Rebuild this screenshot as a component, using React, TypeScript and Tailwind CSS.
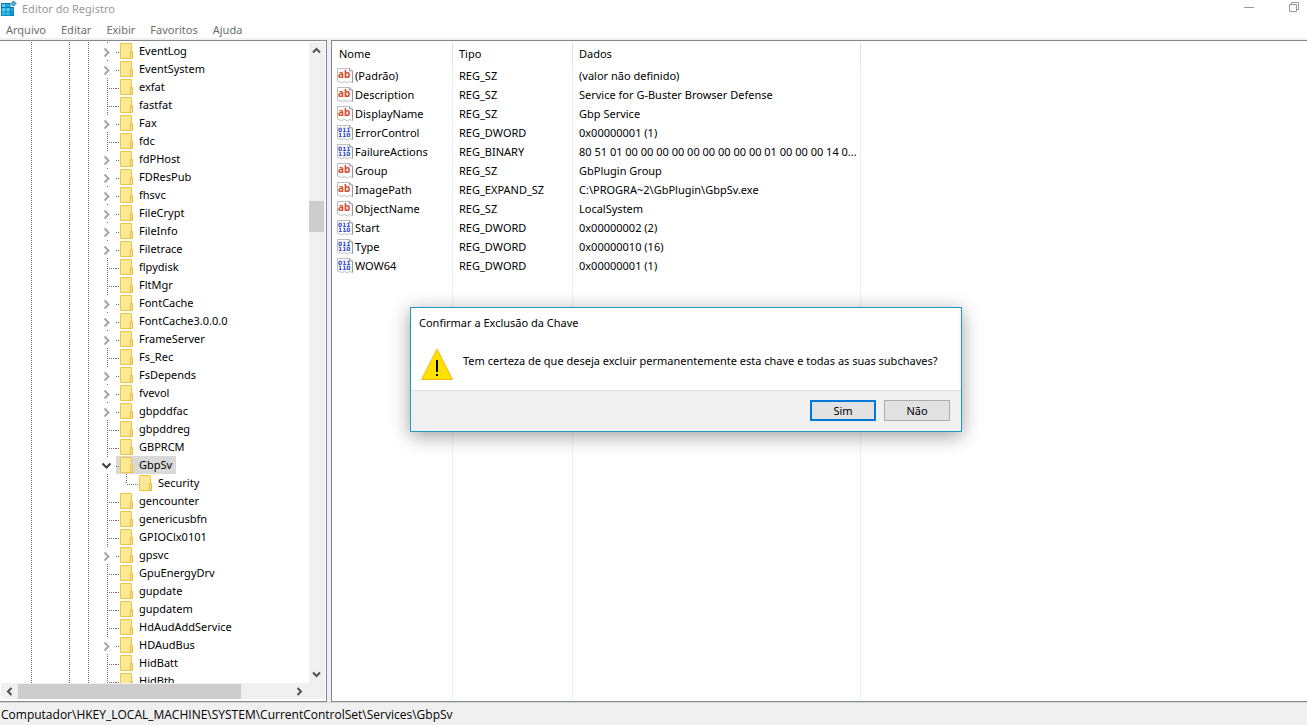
import { memo, useState } from 'react';

type TreeKey = {
  name: string;
  children?: boolean;
  open?: boolean;
  nested?: boolean;
};

type RegistryValue = {
  name: string;
  type: string;
  data: string;
};

const menus = ['Arquivo', 'Editar', 'Exibir', 'Favoritos', 'Ajuda'];

const treeKeys: TreeKey[] = [
  { name: 'EventLog', children: true },
  { name: 'EventSystem', children: true },
  { name: 'exfat' },
  { name: 'fastfat' },
  { name: 'Fax', children: true },
  { name: 'fdc' },
  { name: 'fdPHost', children: true },
  { name: 'FDResPub', children: true },
  { name: 'fhsvc', children: true },
  { name: 'FileCrypt', children: true },
  { name: 'FileInfo', children: true },
  { name: 'Filetrace', children: true },
  { name: 'flpydisk' },
  { name: 'FltMgr' },
  { name: 'FontCache', children: true },
  { name: 'FontCache3.0.0.0', children: true },
  { name: 'FrameServer', children: true },
  { name: 'Fs_Rec' },
  { name: 'FsDepends', children: true },
  { name: 'fvevol', children: true },
  { name: 'gbpddfac', children: true },
  { name: 'gbpddreg' },
  { name: 'GBPRCM' },
  { name: 'GbpSv', children: true, open: true },
  { name: 'Security', nested: true },
  { name: 'gencounter' },
  { name: 'genericusbfn' },
  { name: 'GPIOClx0101' },
  { name: 'gpsvc', children: true },
  { name: 'GpuEnergyDrv' },
  { name: 'gupdate' },
  { name: 'gupdatem' },
  { name: 'HdAudAddService' },
  { name: 'HDAudBus', children: true },
  { name: 'HidBatt' },
  { name: 'HidBth' },
];

const values: RegistryValue[] = [
  { name: '(Padrão)', type: 'REG_SZ', data: '(valor não definido)' },
  { name: 'Description', type: 'REG_SZ', data: 'Service for G-Buster Browser Defense' },
  { name: 'DisplayName', type: 'REG_SZ', data: 'Gbp Service' },
  { name: 'ErrorControl', type: 'REG_DWORD', data: '0x00000001 (1)' },
  { name: 'FailureActions', type: 'REG_BINARY', data: '80 51 01 00 00 00 00 00 00 00 00 00 01 00 00 00 14 0...' },
  { name: 'Group', type: 'REG_SZ', data: 'GbPlugin Group' },
  { name: 'ImagePath', type: 'REG_EXPAND_SZ', data: 'C:\\PROGRA~2\\GbPlugin\\GbpSv.exe' },
  { name: 'ObjectName', type: 'REG_SZ', data: 'LocalSystem' },
  { name: 'Start', type: 'REG_DWORD', data: '0x00000002 (2)' },
  { name: 'Type', type: 'REG_DWORD', data: '0x00000010 (16)' },
  { name: 'WOW64', type: 'REG_DWORD', data: '0x00000001 (1)' },
];

const RegistryLogo = () => (
  <svg width="16" height="18" viewBox="0 0 16 18" aria-hidden="true" className="shrink-0">
    <path d="M0 3h9.500v4H13v9H0z" fill="#0b7ab0" />
    <path d="M1 4h3.500v3H1zM1 8h3.500v3.500H1zM5.300 8h3.500v3.500H5.300z" fill="#56cdf6" />
    <path d="M5.300 4h3.500v3H5.300zM9.600 8h2.800v3.500H9.600z" fill="#1ba9e4" />
    <path d="M1 12.300h3.500v3H1zM5.300 12.300h3.500v3H5.300z" fill="#35bff0" />
    <path d="M9.600 12.300h2.800v3H9.600z" fill="#149bd6" />
    <path d="M12.500 1l2.500 2.500L12.500 6 10 3.500z" fill="#56b8e0" stroke="#0b6c9c" />
  </svg>
);

const Guides = ({ item }: { item: TreeKey }) => (
  <svg width={item.nested ? 135 : 116} height="18" aria-hidden="true" className="shrink-0">
    <g stroke="#6e6e6e" strokeDasharray="1 1" shapeRendering="crispEdges">
      <path d="M31.500 0v18M69.500 0v18M88.500 0v18" />
      <path d={item.children ? 'M107.500 0v2' : 'M107.500 0v18'} />
      {!item.children && !item.nested && <path d="M109 10.500h7" />}
      {item.nested && <path d="M126.500 0v10M127 10.500h8" />}
    </g>
    {item.children && !item.open && <path d="M104.500 6.500l4 4-4 4" fill="none" stroke="#a6a6a6" strokeWidth="2" />}
    {item.open && <path d="M102.500 7.500l4 4 4-4" fill="none" stroke="#404040" strokeWidth="2" />}
  </svg>
);

const Folder = () => (
  <svg width="20" height="18" aria-hidden="true" className="shrink-0">
    <path d="M0 10.500h3" stroke="#6e6e6e" strokeDasharray="1 1" shapeRendering="crispEdges" />
    <path d="M4.500 1.500h11v15h-11z" fill="#ffe793" stroke="#ecc645" />
    <path d="M14.500 9.500h2v7h-2z" fill="#ffe793" stroke="#e6bd3c" />
  </svg>
);

const ValueIcon = ({ text }: { text: boolean }) => (
  <svg width="16" height="17" viewBox="0 0 16 17" aria-hidden="true" className="shrink-0">
    <path
      d="M.5 1.500h12l3 2.500v11.500l-3-1-2 1.500-3-1.500-3 1-4-1.500z"
      fill="#fff"
      stroke="#bdbdbd"
    />
    <path d="M12.500 1.500v2.500h3v11.500" fill="none" stroke="#999" />
    {text ? (
      <text x="1" y="11" fill="#d84a2b" fontSize="10" fontWeight="700" fontFamily="Noto Sans, sans-serif">
        ab
      </text>
    ) : (
      <g fill="#2947cf" fontSize="6" fontWeight="700" fontFamily="DejaVu Sans, sans-serif">
        <text x="1" y="8">011</text>
        <text x="1" y="13">110</text>
      </g>
    )}
  </svg>
);

const Arrow = ({ d }: { d: string }) => (
  <svg width="9" height="9" viewBox="0 0 9 9" aria-hidden="true">
    <path d={d} fill="none" stroke="#505050" strokeWidth="2" />
  </svg>
);

const App = () => {
  const [selectedKey, setSelectedKey] = useState<string>('GbpSv');
  const [confirming, setConfirming] = useState<boolean>(true);

  return (
    <div className="relative flex flex-col h-screen overflow-hidden bg-[#f0f0f0] text-black text-[11px] leading-4 font-['Noto_Sans','Open_Sans',sans-serif]">
      <header className="bg-white shrink-0">
        <div className="flex items-center h-[18px] pl-px pr-[7px]">
          <RegistryLogo />
          <h1 className="flex-1 pl-[5px] text-[#999999]">Editor do Registro</h1>
          <div className="flex self-start gap-[34px] pt-[2px]">
            <button type="button" aria-label="Minimizar">
              <svg width="11" height="11" aria-hidden="true">
                <path d="M0 5.500h10" stroke="#999" />
              </svg>
            </button>
            <button type="button" aria-label="Restaurar">
              <svg width="11" height="11" aria-hidden="true">
                <path d="M.5 2.500h7v7h-7zM2.500 2v-1.500h7v7h-2" fill="none" stroke="#999" />
              </svg>
            </button>
          </div>
        </div>
        <nav className="flex items-center gap-[15px] h-5 pt-1 pl-[6px] text-[#6d6d6d]">
          {menus.map((menu) => (
            <button type="button" key={menu}>
              {menu}
            </button>
          ))}
        </nav>
      </header>

      <main className="flex flex-1 min-h-0 gap-1 pt-[2px]">
        <section className="flex flex-col w-[327px] shrink-0 bg-white border-y border-r border-[#828790] px-px pt-px pb-[2px]">
          <div className="flex flex-1 min-h-0">
            <ul className="flex-1 min-w-0 overflow-hidden -ml-px">
              {treeKeys.map((item) => (
                <li key={item.name} className="flex h-[18px]">
                  <Guides item={item} />
                  <button
                    type="button"
                    onClick={() => setSelectedKey(item.name)}
                    className={`flex items-center h-[18px] pr-1 ${selectedKey === item.name ? 'bg-[#d9d9d9]' : ''}`}
                  >
                    <Folder />
                    <span className="pl-[3px]">{item.name}</span>
                  </button>
                </li>
              ))}
            </ul>
            <div className="flex flex-col items-center w-4 pr-px bg-[#f0f0f0]">
              <div className="flex items-center h-[17px]">
                <Arrow d="M1 6.500l3.500-3.500 3.500 3.500" />
              </div>
              <div className="flex-[142]" />
              <div className="w-[15px] h-[31px] bg-[#cdcdcd]" />
              <div className="flex-[434]" />
              <div className="flex items-center h-[17px]">
                <Arrow d="M1 2.500l3.500 3.500 3.500-3.500" />
              </div>
            </div>
          </div>
          <div className="flex items-center h-4 pr-[17px] bg-[#f0f0f0]">
            <div className="flex justify-center w-[17px]">
              <Arrow d="M6.500 1l-3.500 3.500 3.500 3.500" />
            </div>
            <div className="flex-[223] h-[15px] bg-[#cdcdcd]" />
            <div className="flex-[50]" />
            <div className="flex justify-center w-[17px]">
              <Arrow d="M2.500 1l3.500 3.500-3.500 3.500" />
            </div>
          </div>
        </section>

        <section className="flex-1 min-w-0 bg-white border-y border-l border-[#828790] pt-px">
          <table className="table-fixed border-separate border-spacing-0 w-full h-full text-left whitespace-nowrap">
            <colgroup>
              <col className="w-[121px]" />
              <col className="w-[120px]" />
              <col className="w-[288px]" />
              <col />
            </colgroup>
            <thead>
              <tr className="h-6">
                <th className="h-6 p-0 pl-[7px] font-normal border-r border-[#e2e2e2]">Nome</th>
                <th className="h-6 p-0 pl-[6px] font-normal border-r border-[#e2e2e2]">Tipo</th>
                <th className="h-6 p-0 pl-[6px] font-normal border-r border-[#e2e2e2]">Dados</th>
                <td />
              </tr>
            </thead>
            <tbody>
              {values.map((value) => (
                <tr key={value.name} className="h-[19px]">
                  <td className="h-[19px] p-0 pl-[5px] border-r border-[#e6f0fb]">
                    <div className="flex items-center gap-[2px]">
                      <ValueIcon text={value.type.endsWith('SZ')} />
                      {value.name}
                    </div>
                  </td>
                  <td className="h-[19px] p-0 pl-[6px] border-r border-[#e6f0fb]">{value.type}</td>
                  <td className="h-[19px] p-0 pl-[6px] border-r border-[#e6f0fb]">{value.data}</td>
                  <td />
                </tr>
              ))}
              <tr>
                <td className="border-r border-[#e6f0fb]" />
                <td className="border-r border-[#e6f0fb]" />
                <td className="border-r border-[#e6f0fb]" />
                <td />
              </tr>
            </tbody>
          </table>
        </section>
      </main>

      <footer className="flex items-center h-[23px] shrink-0 pl-px pt-px border-t border-[#d7d7d7] text-[12px] font-['Open_Sans',sans-serif]">
        Computador\HKEY_LOCAL_MACHINE\SYSTEM\CurrentControlSet\Services\GbpSv
      </footer>

      {confirming && (
        <div
          role="dialog"
          aria-labelledby="confirmTitle"
          className="absolute left-[410px] top-[307px] w-[552px] bg-white border border-[#1c9cba] shadow-[0_4px_18px_rgba(0,0,0,0.38)]"
        >
          <h2 id="confirmTitle" className="pl-2 pt-[7px] h-8">
            Confirmar a Exclusão da Chave
          </h2>
          <div className="flex h-[51px] pl-[10px] pt-2 border-b border-[#dfdfdf]">
            <svg width="32" height="32" viewBox="0 0 32 32" aria-hidden="true" className="shrink-0">
              <path d="M16 1L31.500 31.500H.5z" fill="#ffe100" stroke="#fdb913" />
              <path d="M15 12h2v12h-2zM15 26h2v2h-2z" fill="#000" />
            </svg>
            <p className="pl-[10px] pt-[5px]">
              Tem certeza de que deseja excluir permanentemente esta chave e todas as suas subchaves?
            </p>
          </div>
          <div className="flex justify-end gap-2 h-10 pt-[9px] pr-[11px] bg-[#f0f0f0]">
            <button
              type="button"
              onClick={() => setConfirming(false)}
              className="w-[66px] h-[21px] bg-[#e1e1e1] border-2 border-[#0078d7]"
            >
              Sim
            </button>
            <button
              type="button"
              onClick={() => setConfirming(false)}
              className="w-[66px] h-[21px] bg-[#e1e1e1] border border-[#adadad]"
            >
              Não
            </button>
          </div>
        </div>
      )}
    </div>
  );
};

export default memo(App);
